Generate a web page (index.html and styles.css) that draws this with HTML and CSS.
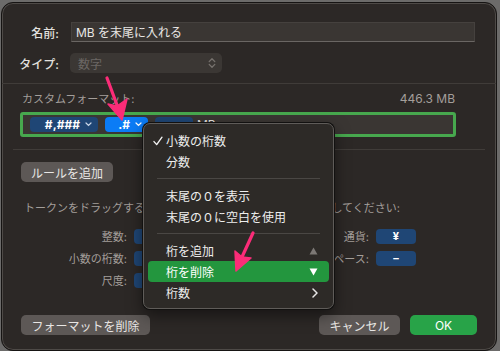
FILE: index.html
```html
<!DOCTYPE html>
<html lang="ja">
<head>
    <meta charset="UTF-8">
    <meta name="viewport" content="width=device-width, initial-scale=1.0">
    <title>カスタムフォーマット</title>
    <link rel="stylesheet" href="styles.css">
</head>
<body>
    <div class="window">
        <div class="top">
            <div class="field-row">
                <label class="label">名前:</label>
                <div class="textfield">MB を末尾に入れる</div>
            </div>
            <div class="field-row type-row">
                <label class="label">タイプ:</label>
                <div class="popup">
                    <span>数字</span>
                    <svg width="8" height="12" viewBox="0 0 8 12"><path d="M1.2 4.6 L4 1.8 L6.8 4.6 M1.2 7.4 L4 10.2 L6.8 7.4" fill="none" stroke="#77726e" stroke-width="1.3" stroke-linecap="round" stroke-linejoin="round"/></svg>
                </div>
            </div>
        </div>
        <div class="divider"></div>

        <div class="lower">
            <div class="format-head">
                <span>カスタムフォーマット:</span>
                <span>446.3 MB</span>
            </div>

            <div class="token-field">
                <span class="token wide">#,###
                    <svg width="7" height="5" viewBox="0 0 7 5"><path d="M1 1 L3.5 3.5 L6 1" fill="none" stroke="#c9d6e8" stroke-width="1.2" stroke-linecap="round"/></svg>
                </span>
                <span class="token selected">.#
                    <svg width="7" height="5" viewBox="0 0 7 5"><path d="M1 1 L3.5 3.5 L6 1" fill="none" stroke="#ffffff" stroke-width="1.2" stroke-linecap="round"/></svg>
                </span>
                <span class="token scale">K</span>
                <span class="literal">MB</span>
            </div>

            <div class="divider inner"></div>

            <button class="btn rule-btn">ルールを追加</button>

            <p class="hint">トークンをドラッグするか、値を入力してフォーマットを作成してください:</p>

            <div class="palette">
                <div class="pcol">
                    <div class="prow"><span class="plabel">整数:</span><span class="ptoken">#</span></div>
                    <div class="prow"><span class="plabel">小数の桁数:</span><span class="ptoken">.#</span></div>
                    <div class="prow"><span class="plabel">尺度:</span><span class="ptoken">K</span></div>
                </div>
                <div class="pcol right">
                    <div class="prow"><span class="plabel">通貨:</span><span class="ptoken">¥</span></div>
                    <div class="prow"><span class="plabel">スペース:</span><span class="ptoken">–</span></div>
                </div>
            </div>

            <div class="footer">
                <button class="btn">フォーマットを削除</button>
                <button class="btn cancel">キャンセル</button>
                <button class="btn ok">OK</button>
            </div>
        </div>

        <div class="menu">
            <div class="item checked">
                <svg class="check" width="10" height="10" viewBox="0 0 10 10"><path d="M1 5.6 L3.7 8.6 L9 1.2" fill="none" stroke="#f2f2f2" stroke-width="1.4" stroke-linecap="round" stroke-linejoin="round"/></svg>
                小数の桁数
            </div>
            <div class="item">分数</div>
            <div class="menu-sep"></div>
            <div class="item">末尾の０を表示</div>
            <div class="item">末尾の０に空白を使用</div>
            <div class="menu-sep"></div>
            <div class="item">桁を追加
                <svg class="key" width="9" height="8" viewBox="0 0 9 8"><path d="M4.5 0.5 L8.5 7.5 L0.5 7.5 Z" fill="#7c7875"/></svg>
            </div>
            <div class="item active">桁を削除
                <svg class="key" width="9" height="8" viewBox="0 0 9 8"><path d="M0.5 0.5 L8.5 0.5 L4.5 7.5 Z" fill="#ffffff"/></svg>
            </div>
            <div class="item">桁数
                <svg class="key" width="6" height="10" viewBox="0 0 6 10"><path d="M1 1 L5 5 L1 9" fill="none" stroke="#e6e6e6" stroke-width="1.5" stroke-linecap="round" stroke-linejoin="round"/></svg>
            </div>
        </div>
    </div>

    <!-- annotation arrows -->
    <svg class="arrows" width="500" height="351" viewBox="0 0 500 351">
        <path d="M107 78 L117 105" stroke="#fb2c78" stroke-width="3.2" stroke-linecap="round"/>
        <path d="M122 120 L108 104 L117 106 L127 99 Z" fill="#fb2c78" stroke="#fb2c78" stroke-width="1.5" stroke-linejoin="round"/>
        <path d="M253 233 L242 257" stroke="#fb2c78" stroke-width="3.2" stroke-linecap="round"/>
        <path d="M236 271 L235 251 L242 257 L251 258 Z" fill="#fb2c78" stroke="#fb2c78" stroke-width="1.5" stroke-linejoin="round"/>
    </svg>
</body>
</html>
```

FILE: styles.css
```css
* {
    margin: 0;
    padding: 0;
    box-sizing: border-box;
}

body {
    background-color: #6c6b6a;
    font-family: Inter, "Noto Sans CJK JP", sans-serif;
    color: #e4e2e0;
    width: 500px;
    height: 351px;
    overflow: hidden;
}

.window {
    position: relative;
    margin: 2px 0 0 1px;
    width: 496px;
    height: 349px;
    background-color: #2c2826;
    border: 1px solid #161413;
    border-radius: 12px;
    box-shadow: inset 0 0 0 1px #4e4a47;
    overflow: hidden;
}

/* Name / type rows */
.top {
    padding-top: 19px;
}

.field-row {
    display: flex;
    align-items: center;
    height: 20px;
}

.type-row {
    margin-top: 11px;
}

.label {
    width: 57px;
    margin-right: 12px;
    text-align: right;
    font-size: 12px;
    font-weight: 500;
    color: #e2e0de;
}

.textfield {
    width: 404px;
    height: 20px;
    padding: 0 4px;
    font-size: 12px;
    line-height: 19px;
    color: #e8e6e4;
    background-color: #3a3633;
    border: 1px solid #45413e;
    border-bottom-color: #6a6663;
}

.popup {
    display: flex;
    align-items: center;
    justify-content: space-between;
    width: 152px;
    height: 20px;
    margin-left: -1px;
    padding: 0 6px 0 8px;
    font-size: 12px;
    color: #6c6764;
    background-color: #3b3734;
    border-radius: 5px;
}

.divider {
    height: 1px;
    margin-top: 10px;
    background-color: #403c39;
}

.divider.inner {
    margin: 12px 0 0 -7px;
    width: 472px;
}

/* Custom format area */
.lower {
    padding-left: 18px;
}

.format-head {
    display: flex;
    justify-content: space-between;
    width: 436px;
    margin-top: 8px;
    padding: 0 1px 0 2px;
    font-size: 11px;
    line-height: 14px;
    color: #a39e9a;
}

.format-head span:last-child {
    font-size: 12px;
}

.token-field {
    display: flex;
    align-items: center;
    gap: 7px;
    width: 436px;
    height: 25px;
    margin-top: 6px;
    padding-left: 7px;
    background-color: #3a3633;
    border: 3px solid #47a84e;
    border-radius: 3px;
}

.token {
    display: flex;
    align-items: center;
    justify-content: flex-end;
    gap: 5px;
    height: 15px;
    padding: 0 6px;
    font-size: 12px;
    font-weight: 700;
    color: #ffffff;
    background-color: #1f4675;
    border-radius: 4px;
}

.token.wide {
    width: 68px;
}

.token.selected {
    width: 43px;
    background-color: #0b7cf6;
}

.token.scale {
    width: 38px;
    color: #1f4675;
}

.literal {
    margin-left: -3px;
    font-size: 12px;
    color: #e4e2e0;
}

.btn {
    height: 20px;
    padding: 0 10px;
    font-family: inherit;
    font-size: 12px;
    color: #e8e6e4;
    background-color: #5d5856;
    border: none;
    border-radius: 5px;
}

.rule-btn {
    display: block;
    width: 92px;
    margin: 12px 0 0 1px;
}

.hint {
    margin: 19px 0 0 4px;
    font-size: 11px;
    line-height: 14px;
    color: #a39e9a;
    white-space: nowrap;
}

/* Token palette */
.palette {
    display: flex;
    margin-top: 10px;
    padding-right: 80px;
}

.pcol.right {
    margin-left: auto;
}

.prow {
    display: flex;
    align-items: center;
    gap: 7px;
    height: 22px;
}

.plabel {
    font-size: 11px;
    text-align: right;
    color: #a39e9a;
}

.pcol:first-child .plabel {
    width: 107px;
}

.pcol.right .plabel {
    width: 60px;
}

.ptoken {
    width: 40px;
    height: 15px;
    font-size: 11px;
    font-weight: 700;
    line-height: 15px;
    text-align: center;
    color: #ffffff;
    background-color: #1f4675;
    border-radius: 4px;
}

.footer {
    display: flex;
    gap: 10px;
    width: 456px;
    margin: 24px 0 0 1px;
}

.footer .btn:first-child {
    width: 129px;
}

.cancel {
    width: 81px;
    margin-left: auto;
}

.ok {
    width: 67px;
    background-color: #28a348;
    color: #ffffff;
}

/* Popup menu over the dialog */
.menu {
    position: absolute;
    left: 141px;
    top: 120px;
    width: 191px;
    height: 186px;
    padding: 6px 4px;
    background-color: #2d2a27;
    border: 1px solid #5f5c59;
    border-radius: 7px;
    box-shadow: 0 0 0 1px #121110, 0 6px 16px rgba(0, 0, 0, 0.5);
}

.item {
    position: relative;
    display: flex;
    align-items: center;
    justify-content: space-between;
    height: 21px;
    padding: 0 11px 0 18px;
    font-size: 12px;
    color: #eeeeee;
    border-radius: 4px;
}

.item.active {
    background-color: #23963e;
    color: #ffffff;
}

.check {
    position: absolute;
    left: 5px;
    top: 6px;
}

.menu-sep {
    height: 1px;
    margin: 6px 9px;
    background-color: #4a4744;
}

.arrows {
    position: absolute;
    top: 0;
    left: 0;
}
```
